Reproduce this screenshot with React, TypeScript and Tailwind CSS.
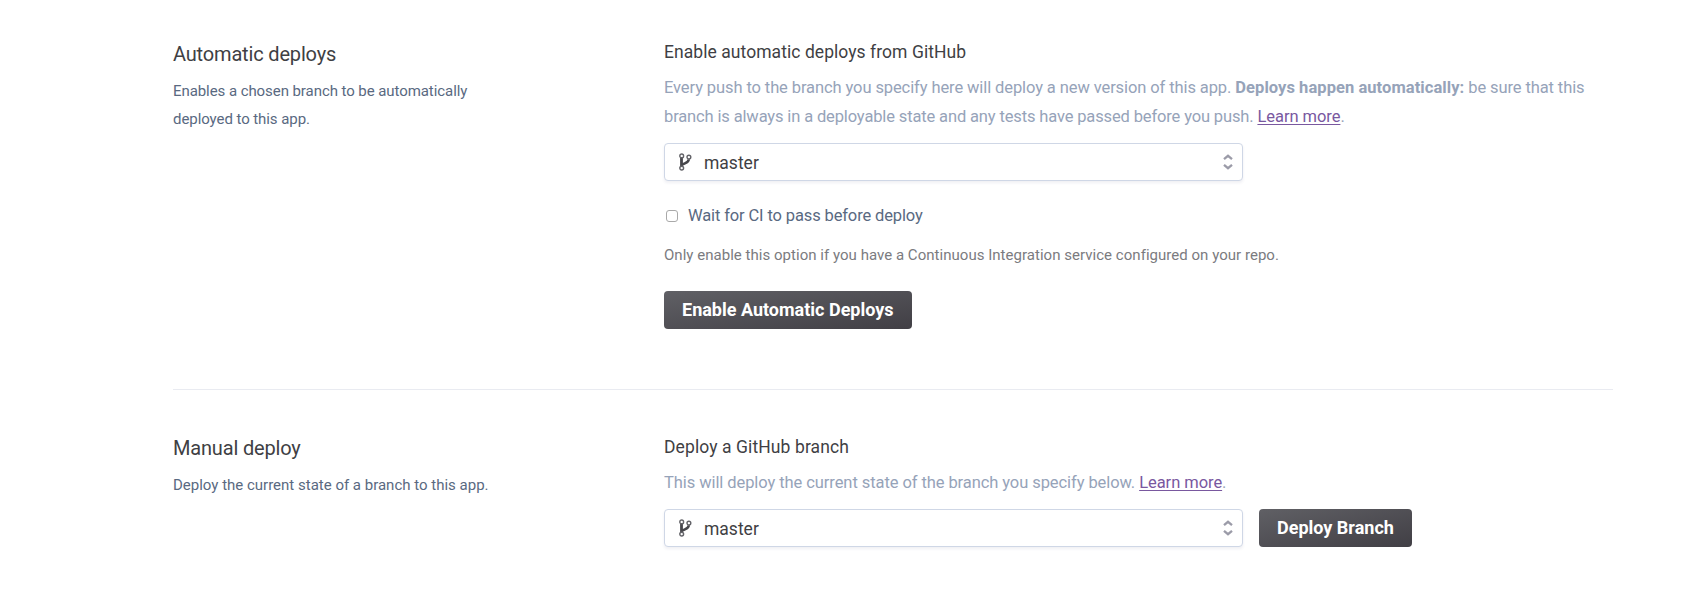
function BranchIcon() {
  return (
    <svg width="14" height="18" viewBox="0 0 14 18" fill="none" className="shrink-0">
      <path d="M2.5 4.8V13" stroke="#46464b" strokeWidth="2.8" />
      <path d="M9.8 6.2C9.8 9.6 7 9.6 3 11.8" stroke="#46464b" strokeWidth="2.5" />
      <circle cx="2.7" cy="2.9" r="1.9" fill="#fff" stroke="#636368" strokeWidth="1.4" />
      <circle cx="9.9" cy="4.1" r="1.9" fill="#fff" stroke="#636368" strokeWidth="1.4" />
      <circle cx="2.7" cy="15.1" r="1.9" fill="#fff" stroke="#636368" strokeWidth="1.4" />
    </svg>
  );
}

function SortIcon() {
  return (
    <svg width="10" height="16" viewBox="0 0 10 16" fill="none" stroke="#9b9ba8" strokeWidth="2.3" className="shrink-0">
      <path d="M1 5.2L5 1.8L9 5.2" />
      <path d="M1 10.8L5 14.2L9 10.8" />
    </svg>
  );
}

function BranchSelect() {
  return (
    <button
      type="button"
      className="flex h-[38px] w-[579px] items-center rounded-[4px] border border-[#cfd7e6] bg-white pr-[9px] pl-[14px] shadow-[0_2px_3px_rgba(60,60,110,0.08)]"
    >
      <BranchIcon />
      <span className="ml-[11px] flex-1 pt-0.5 text-left text-[17.5px] leading-7 text-[#3f3f44]">master</span>
      <SortIcon />
    </button>
  );
}

function ActionButton({ children }: { children: string }) {
  return (
    <button
      type="button"
      className="flex h-[38px] items-center justify-center rounded-[4px] bg-linear-to-br from-[#606065] to-[#413f45] px-[18px] pb-0.5 text-[18px] font-bold whitespace-nowrap text-white"
    >
      {children}
    </button>
  );
}

function LearnMore() {
  return (
    <a href="#" className="tracking-[-0.05px] text-[#79589f] underline decoration-1 underline-offset-2">
      Learn more
    </a>
  );
}

export default function App() {
  return (
    <main className="h-[612px] w-[1700px] overflow-hidden bg-white pr-[87px] pl-[173px] font-['Roboto',sans-serif]">
      <section className="flex h-[389px]">
        <div className="w-[491px] shrink-0 pt-10">
          <h2 className="text-[20px] leading-7 tracking-[-0.17px] text-[#3f3f44]">Automatic deploys</h2>
          <p className="mt-[9px] text-[15px] leading-7 tracking-[-0.07px] text-[#596981]">
            Enables a chosen branch to be automatically
            <br />
            deployed to this app.
          </p>
        </div>
        <div className="flex-1 pt-[38px]">
          <h3 className="text-[17.5px] leading-7 tracking-[0.06px] text-[#3f3f44]">Enable automatic deploys from GitHub</h3>
          <p className="mt-[7px] text-[16.5px] leading-[29px] tracking-[-0.1px] whitespace-nowrap text-[#96a3b9]">
            Every push to the branch you specify here will deploy a new version of this app.{' '}
            <strong className="font-bold tracking-[0.06px]">Deploys happen automatically:</strong> be sure that this
            <br />
            <span className="tracking-[-0.14px]">
              branch is always in a deployable state and any tests have passed before you push.{' '}
            </span>
            <LearnMore />.
          </p>
          <div className="mt-3">
            <BranchSelect />
          </div>
          <label className="mt-[21px] flex h-7 items-center text-[16.5px] tracking-[-0.13px] text-[#596981]">
            <input
              type="checkbox"
              className="mr-[10px] ml-[2px] size-3 appearance-none rounded-[3px] border border-[#a9a9a9] bg-white"
            />
            Wait for CI to pass before deploy
          </label>
          <p className="mt-[11px] text-[15px] leading-7 tracking-[0.03px] text-[#7b7b80]">
            Only enable this option if you have a Continuous Integration service configured on your repo.
          </p>
          <div className="mt-[22px] flex">
            <ActionButton>Enable Automatic Deploys</ActionButton>
          </div>
        </div>
      </section>
      <hr className="border-t border-[#e9ebf1]" />
      <section className="flex">
        <div className="w-[491px] shrink-0 pt-[44px]">
          <h2 className="text-[20px] leading-7 tracking-[-0.17px] text-[#3f3f44]">Manual deploy</h2>
          <p className="mt-[9px] text-[15px] leading-7 text-[#596981]">
            Deploy the current state of a branch to this app.
          </p>
        </div>
        <div className="flex-1 pt-[43px]">
          <h3 className="text-[17.5px] leading-7 tracking-[0.1px] text-[#3f3f44]">Deploy a GitHub branch</h3>
          <p className="mt-[7px] text-[16.5px] leading-[29px] tracking-[-0.08px] text-[#96a3b9]">
            This will deploy the current state of the branch you specify below. <LearnMore />.
          </p>
          <div className="mt-3 flex gap-4">
            <BranchSelect />
            <ActionButton>Deploy Branch</ActionButton>
          </div>
        </div>
      </section>
    </main>
  );
}
